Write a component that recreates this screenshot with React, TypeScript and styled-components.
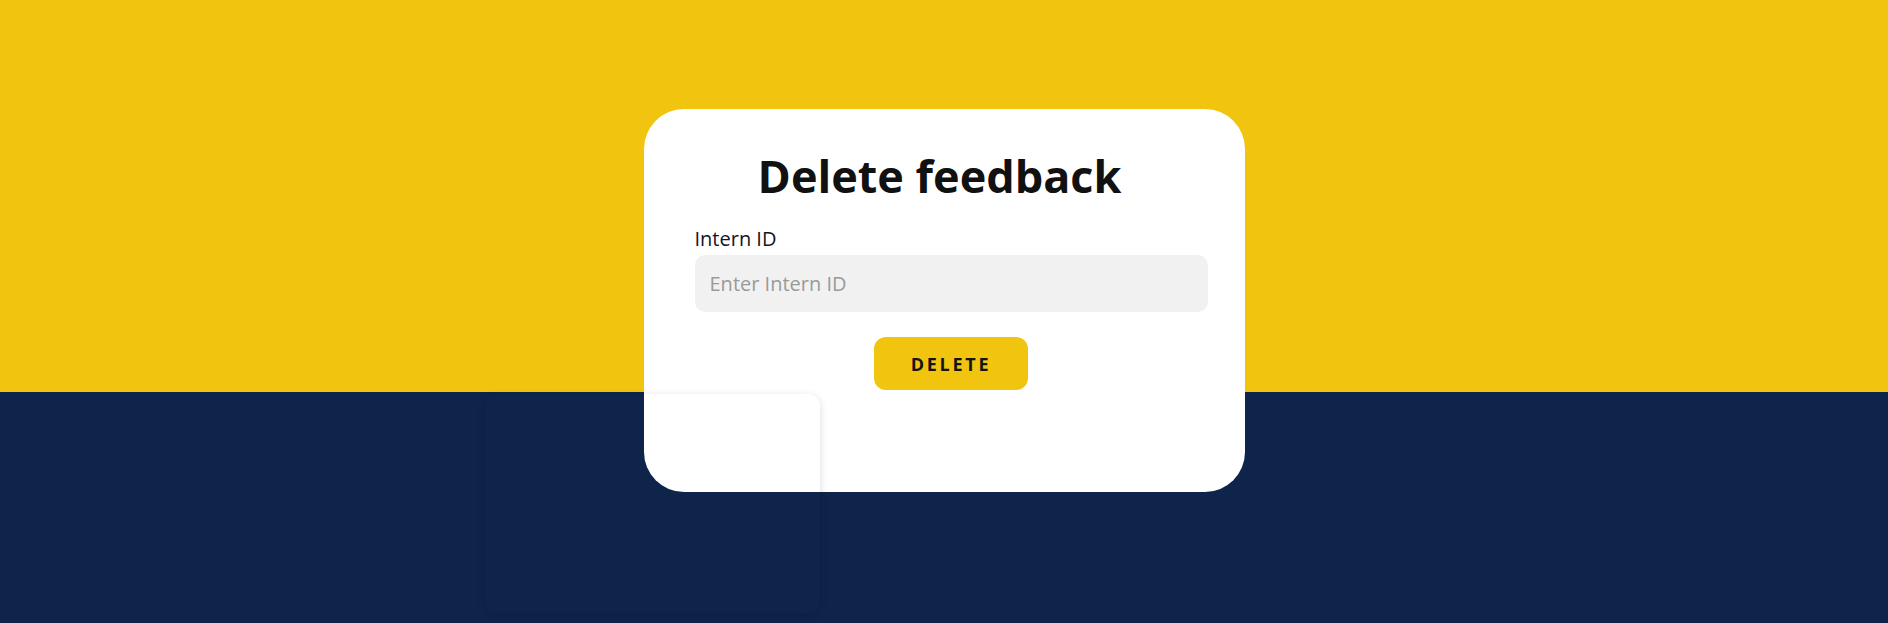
import React, { FunctionComponent } from "react"
import styled, { createGlobalStyle } from "styled-components"

const YELLOW = "#f1c40f"
const NAVY = "#0e244a"

const GlobalStyle = createGlobalStyle`
  html, body {
    margin: 0;
    padding: 0;
  }
  body {
    font-family: "Open Sans", "Noto Sans", sans-serif;
  }
  * {
    box-sizing: border-box;
  }
`

export const DeleteFeedback: FunctionComponent = () => {
  return (
    <Page>
      <Card>
        <Title>Delete feedback</Title>
        <Form
          onSubmit={(e) => {
            e.preventDefault()
          }}
        >
          <Field>
            <Label htmlFor="internId">Intern ID</Label>
            <Input id="internId" type="text" placeholder="Enter Intern ID" />
          </Field>
          <DeleteButton type="submit">Delete</DeleteButton>
        </Form>
      </Card>
      <ToastArea />
    </Page>
  )
}

export default function App() {
  return (
    <>
      <GlobalStyle />
      <DeleteFeedback />
    </>
  )
}

const Page = styled.div`
  position: relative;
  width: 100%;
  height: 623px;
  overflow: hidden;
  display: flex;
  justify-content: center;
  align-items: flex-start;
  padding-top: 109px;
  background: linear-gradient(
    to bottom,
    ${YELLOW} 0,
    ${YELLOW} 392px,
    ${NAVY} 392px,
    ${NAVY} 100%
  );
`

const Card = styled.div`
  width: 601px;
  height: 383px;
  background: #fff;
  border-radius: 40px;
  padding: 37px 37px 0 51px;
  display: flex;
  flex-direction: column;
`

const Title = styled.h1`
  margin: 0 0 19px;
  padding-right: 23px;
  text-align: center;
  color: #111;
  font-size: 45px;
  font-weight: 700;
  line-height: 60px;
`

const Form = styled.form`
  display: flex;
  flex-direction: column;
  align-items: center;
  gap: 25px;
`

const Field = styled.div`
  width: 100%;
  display: flex;
  flex-direction: column;
  gap: 3px;
`

const Label = styled.label`
  color: #14141f;
  font-size: 20px;
  line-height: 27px;
`

const Input = styled.input`
  width: 100%;
  height: 57px;
  border: none;
  outline: none;
  border-radius: 10px;
  background: #f1f1f1;
  padding: 0 15px;
  font-family: "Open Sans", "Noto Sans", sans-serif;
  font-size: 20px;
  color: #222;

  &::placeholder {
    color: #9a9a9a;
  }
`

const DeleteButton = styled.button`
  width: 154px;
  height: 53px;
  border: none;
  border-radius: 12px;
  background: ${YELLOW};
  color: #141414;
  font-family: "Open Sans", "Noto Sans", sans-serif;
  font-size: 18px;
  font-weight: 700;
  letter-spacing: 2.7px;
  text-transform: uppercase;
  cursor: pointer;
`

// empty notification container that sits over the page
const ToastArea = styled.div`
  position: absolute;
  left: 485px;
  top: 394px;
  width: 335px;
  height: 219px;
  border-radius: 12px;
  box-shadow: 0 2px 8px rgba(0, 0, 0, 0.14);
  pointer-events: none;
`
